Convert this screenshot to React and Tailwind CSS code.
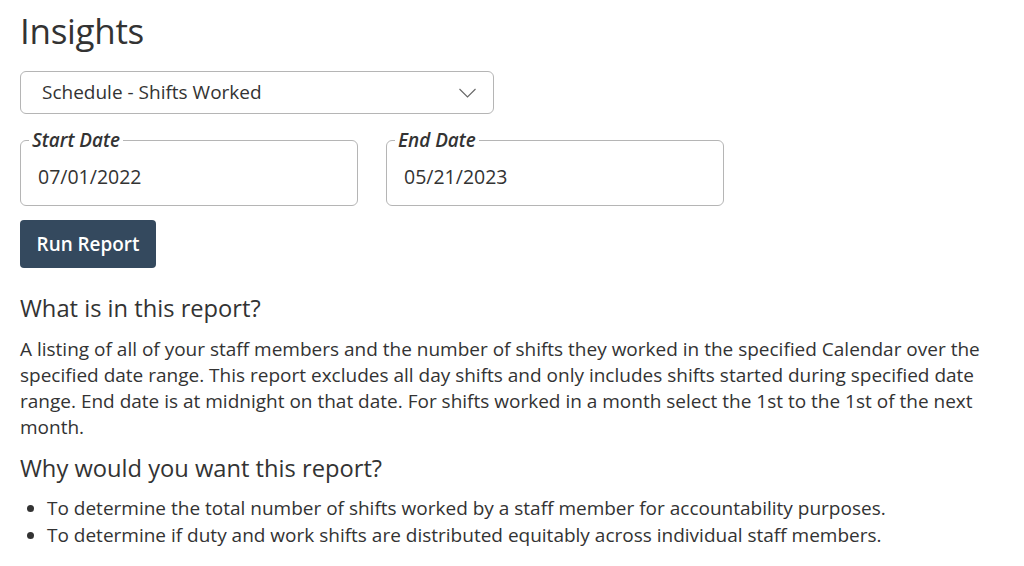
function DateField({ label, value }) {
  return (
    <fieldset className="w-[338px] h-[75px] border border-[#b5b5b5] rounded-md px-[8px] pt-0 pb-0">
      <legend className="px-[3px] text-[18.9px] leading-[18px] font-semibold italic text-[#333]">{label}</legend>
      <div className="pl-[9px] pt-[13px] text-[19.5px] text-[#333]">{value}</div>
    </fieldset>
  )
}

export default function App() {
  return (
    <div className="px-5 pt-[8px] text-[#333]" style={{ fontFamily: '"Open Sans", "Noto Sans", sans-serif' }}>
      <h1 className="text-[35px] leading-[46px] font-normal tracking-[-0.3px]">Insights</h1>
      <div className="mt-[17px] w-[474px] h-[43px] border border-[#b5b5b5] rounded-md flex items-center justify-between pl-[21px] pr-[17px]">
        <span className="text-[19px]">Schedule - Shifts Worked</span>
        <svg width="17" height="10" viewBox="0 0 17 10" fill="none" stroke="#666" strokeWidth="1.1">
          <polyline points="0.5,1 8.5,9 16.5,1" />
        </svg>
      </div>
      <div className="mt-[17px] flex gap-[28px]">
        <DateField label="Start Date" value="07/01/2022" />
        <DateField label="End Date" value="05/21/2023" />
      </div>
      <button className="mt-[14px] w-[136px] h-[48px] bg-[#34495e] rounded-[4px] text-white text-[18.9px] font-semibold">Run Report</button>
      <h2 className="mt-[25px] text-[23.7px] leading-[30px] font-normal">What is in this report?</h2>
      <p className="mt-[13px] max-w-[984px] text-[19px] leading-[26px]">
        A listing of all of your staff members and the number of shifts they worked in the specified Calendar over the specified date range. This report excludes all day shifts and only includes shifts started during specified date range. End date is at midnight on that date. For shifts worked in a month select the 1st to the 1st of the next month.
      </p>
      <h2 className="mt-[13px] text-[23.7px] leading-[30px] font-normal">Why would you want this report?</h2>
      <ul className="mt-[12px] list-disc pl-[27px] text-[19px] leading-[27px]">
        <li>To determine the total number of shifts worked by a staff member for accountability purposes.</li>
        <li>To determine if duty and work shifts are distributed equitably across individual staff members.</li>
      </ul>
    </div>
  )
}
